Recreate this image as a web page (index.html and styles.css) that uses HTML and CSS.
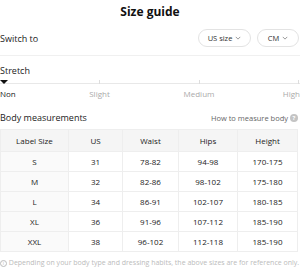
FILE: index.html
```html
<!DOCTYPE html>
<html lang="en">
<head>
  <meta charset="UTF-8" />
  <title>Size guide</title>
  <link rel="stylesheet" href="styles.css">
</head>
<body>
  <div class="sheet">
    <h1 class="title">Size guide</h1>

    <div class="switch-row">
      <span class="label">Switch to</span>
      <div class="pills">
        <button class="pill pill-size">US size
          <svg class="caret" viewBox="0 0 8 5" width="6" height="4"><path d="M1 1l3 3 3-3" fill="none" stroke="#777" stroke-width="1"/></svg>
        </button>
        <button class="pill pill-unit">CM
          <svg class="caret" viewBox="0 0 8 5" width="6" height="4"><path d="M1 1l3 3 3-3" fill="none" stroke="#777" stroke-width="1"/></svg>
        </button>
      </div>
    </div>

    <div class="stretch">
      <div class="label">Stretch</div>
      <div class="track">
        <span class="marker"></span>
        <span class="tick"></span>
        <span class="tick"></span>
        <span class="tick"></span>
      </div>
      <div class="levels">
        <span class="active">Non</span>
        <span>Slight</span>
        <span>Medium</span>
        <span>High</span>
      </div>
    </div>

    <div class="body-head">
      <span class="label">Body measurements</span>
      <span class="how">How to measure body <span class="q">?</span></span>
    </div>

    <table class="sizes">
      <thead>
        <tr><th>Label Size</th><th>US</th><th>Waist</th><th>Hips</th><th>Height</th></tr>
      </thead>
      <tbody>
        <tr><td>S</td><td>31</td><td>78-82</td><td>94-98</td><td>170-175</td></tr>
        <tr><td>M</td><td>32</td><td>82-86</td><td>98-102</td><td>175-180</td></tr>
        <tr><td>L</td><td>34</td><td>86-91</td><td>102-107</td><td>180-185</td></tr>
        <tr><td>XL</td><td>36</td><td>91-96</td><td>107-112</td><td>185-190</td></tr>
        <tr><td>XXL</td><td>38</td><td>96-102</td><td>112-118</td><td>185-190</td></tr>
      </tbody>
    </table>

    <p class="note"><span class="info">i</span> Depending on your body type and dressing habits, the above sizes are for reference only.</p>
  </div>
</body>
</html>
```

FILE: styles.css
```css
* {
  margin: 0;
  padding: 0;
  box-sizing: border-box;
}

body {
  font-family: 'Open Sans', 'Noto Sans', sans-serif;
  background: #fff;
  color: #222;
  width: 300px;
  overflow: hidden;
}

.sheet {
  padding: 4px 0 0 0;
}

.title {
  text-align: center;
  font-size: 12px;
  font-weight: 700;
  line-height: 16px;
  color: #111;
}

.label {
  font-size: 9px;
  color: #222;
}

.switch-row {
  display: flex;
  justify-content: space-between;
  align-items: center;
  margin-top: 9px;
  padding-bottom: 8px;
  border-bottom: 1px solid #f0f0f0;
}

.pills {
  display: flex;
  gap: 6px;
  padding-right: 1px;
}

.pill {
  font-family: inherit;
  font-size: 7.5px;
  color: #333;
  background: #fff;
  border: 1px solid #e3e3e3;
  border-radius: 10px;
  height: 18px;
  padding: 0;
  display: flex;
  align-items: center;
  justify-content: center;
  gap: 3px;
  white-space: nowrap;
}

.pill-size { width: 53px; }
.pill-unit { width: 42px; }

.caret {
  display: block;
}

.stretch {
  margin-top: 8px;
}

.track {
  position: relative;
  height: 1px;
  background: #e8e8e8;
  margin-top: 6px;
}

.marker {
  position: absolute;
  left: 0;
  top: -3px;
  width: 0;
  height: 0;
  border-left: 4px solid transparent;
  border-right: 4px solid transparent;
  border-top: 4px solid #111;
}

.tick {
  position: absolute;
  top: -3px;
  width: 1px;
  height: 4px;
  background: #ddd;
}

.tick:nth-child(2) { left: 99px; }
.tick:nth-child(3) { left: 199px; }
.tick:nth-child(4) { left: 298px; }

.levels {
  display: grid;
  grid-template-columns: 50px 99px 100px 51px;
  font-size: 8px;
  color: #aaa;
  margin-top: 4px;
}

.levels span { text-align: center; }
.levels span:first-child { text-align: left; }
.levels span:last-child { text-align: right; }
.levels .active { color: #222; }

.body-head {
  display: flex;
  justify-content: space-between;
  align-items: center;
  margin-top: 12px;
}

.how {
  font-size: 7.5px;
  color: #666;
  display: flex;
  align-items: center;
  gap: 2px;
  padding-right: 2px;
}

.q {
  display: inline-flex;
  align-items: center;
  justify-content: center;
  width: 8px;
  height: 8px;
  border-radius: 50%;
  background: #c4c4c4;
  color: #fff;
  font-size: 6px;
  font-weight: 700;
}

.sizes {
  width: 298px;
  margin-top: 5px;
  border-collapse: collapse;
  font-size: 8px;
  color: #222;
  border: 1px solid #eee;
}

.sizes th,
.sizes td {
  text-align: center;
  font-weight: 400;
  border: 1px solid #eee;
  height: 20px;
}

.sizes th {
  background: #f5f5f5;
  height: 22px;
}

.sizes td:first-child {
  background: #fafafa;
}

.sizes th:nth-child(1) { width: 68px; }
.sizes th:nth-child(2) { width: 54px; }
.sizes th:nth-child(3) { width: 56px; }
.sizes th:nth-child(4) { width: 59px; }

.note {
  margin-top: 6px;
  font-size: 7px;
  color: #bbb;
  white-space: nowrap;
}

.info {
  display: inline-block;
  width: 7px;
  height: 7px;
  border: 1px solid #bbb;
  border-radius: 50%;
  font-size: 5px;
  line-height: 5px;
  text-align: center;
}
```
